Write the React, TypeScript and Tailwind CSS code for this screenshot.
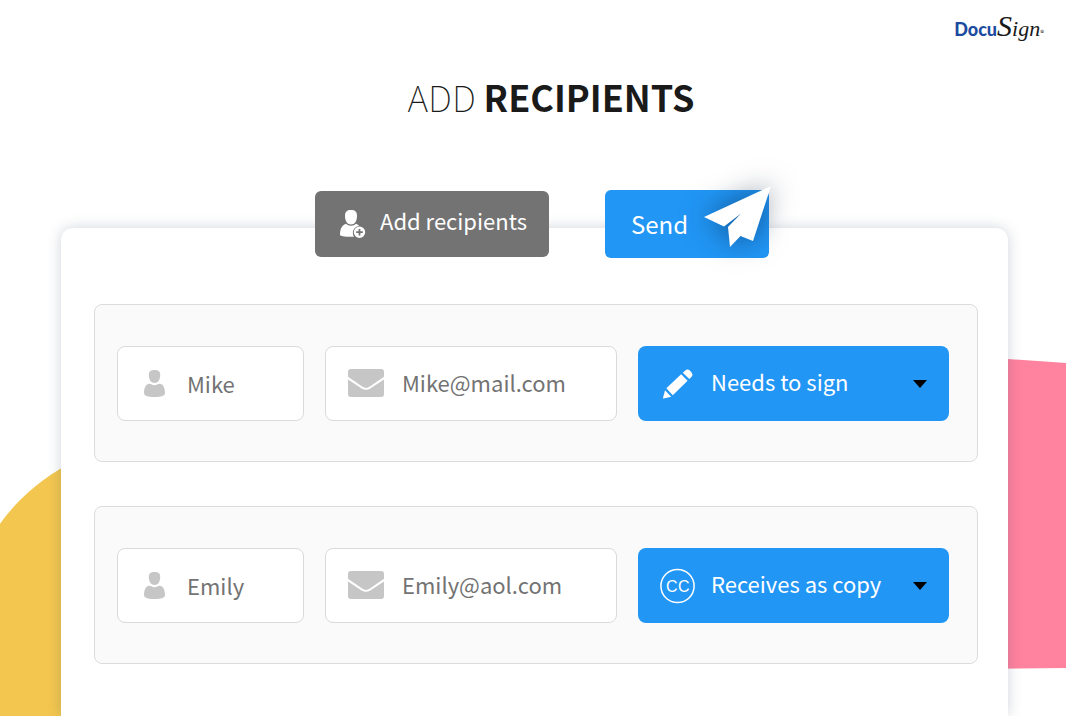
import { ReactNode } from "react";

const UserIcon = () => (
  <svg
    viewBox="0 0 21 27"
    className="h-[27px] w-[21px] flex-shrink-0 fill-[#c6c6c6]"
    aria-hidden="true"
  >
    <path d="M10.500 0C14.600 0 16.200 1.400 16.200 5C16.200 10 13.800 13 10.500 13S4.800 10 4.800 5C4.800 1.400 6.400 0 10.500 0Z" />
    <path d="M4.800 13.800C7.200 13.600 8 15.200 10.500 15.200S13.800 13.600 16.200 13.800C19.500 14.400 21 18.500 21 23C21 25.800 17.500 27 10.500 27S0 25.800 0 23C0 18.500 1.500 14.400 4.800 13.800Z" />
  </svg>
);

const MailIcon = () => (
  <svg
    viewBox="0 0 36 28"
    className="h-7 w-9 flex-shrink-0 fill-[#c6c6c6]"
    aria-hidden="true"
  >
    <path d="M3 0H33Q36 0 36 3V7.800L21.500 17.800Q18 20 14.500 17.800L0 7.800V3Q0 0 3 0Z" />
    <path d="M0 10.400L13.700 19.500Q18 22 22.300 19.500L36 10.400V25Q36 28 33 28H3Q0 28 0 25Z" />
  </svg>
);

const AddUserIcon = () => (
  <svg
    viewBox="0 0 26 28"
    className="h-7 w-[26px] flex-shrink-0 fill-white"
    aria-hidden="true"
  >
    <path d="M11 0C15.200 0 17 1.800 17 6C17 11 14.600 14.500 11 14.500S5 11 5 6C5 1.800 6.800 0 11 0Z" />
    <path d="M6 13.800C7.200 15 9 15.700 11 15.700S14.800 15 16 13.800C17.600 14.500 18.800 15.400 19.300 16C15.500 16.200 12.900 19.300 12.900 22.800C12.900 24.400 13.300 25.600 14 26.700C8.500 27.100 3 26.700 0 25.300C0 19.500 1.200 15.600 6 13.800Z" />
    <path
      fillRule="evenodd"
      d="M19.500 16.500a5.700 5.700 0 1 0 0 11.400a5.700 5.700 0 1 0 0-11.400ZM18.600 18.900H20.400V21.300H22.800V23.100H20.400V25.500H18.600V23.100H16.200V21.300H18.600Z"
    />
  </svg>
);

const PencilIcon = () => (
  <svg viewBox="0 0 30 30" className="h-[30px] w-[30px] fill-white" aria-hidden="true">
    <path d="M2 21.300L8.200 27.800L.4 29.500Q0 29.500 0 29Z" />
    <path d="M3.300 19.200L18.200 5.300L24.600 11.700L9.800 26.200Z" />
    <path d="M19.800 3.800L22.300 1.400Q24.500-.5 26.800 1.500L28.500 3.400Q30.500 5.800 28.300 8L26.300 10.100Z" />
  </svg>
);

const CopyIcon = () => (
  <svg
    viewBox="0 0 36 36"
    className="h-9 w-9 fill-white font-['Liberation_Sans'] text-base"
    aria-hidden="true"
  >
    <circle cx="17.500" cy="18" r="16.600" fill="none" stroke="white" strokeWidth="1.500" />
    <text x="6" y="24">
      C
    </text>
    <text x="18" y="24">
      C
    </text>
  </svg>
);

const Field = (props: {
  label: string;
  type: string;
  value: string;
  icon: ReactNode;
  className: string;
}) => (
  <label
    className={`flex h-[75px] min-w-0 items-center rounded-lg border border-[#dadada] bg-white ${props.className}`}
  >
    {props.icon}
    <input
      type={props.type}
      aria-label={props.label}
      defaultValue={props.value}
      className="w-full min-w-0 bg-transparent text-[22px] text-[#737373] outline-none"
    />
  </label>
);

const Recipient = (props: {
  name: string;
  email: string;
  action: string;
  icon: ReactNode;
}) => {
  return (
    <li className="grid grid-cols-[187fr_292fr_311fr] gap-[21px] rounded-lg border border-[#dcdcdc] bg-[#fafafa] pt-[41px] pr-7 pb-10 pl-[22px]">
      <Field
        label="Name"
        type="text"
        value={props.name}
        icon={<UserIcon />}
        className="gap-[22px] pl-[26px]"
      />
      <Field
        label="Email"
        type="email"
        value={props.email}
        icon={<MailIcon />}
        className="gap-[18px] pr-2 pb-0.5 pl-[22px]"
      />
      <label className="relative block h-[75px] min-w-0">
        <select
          aria-label="Action"
          defaultValue={props.action}
          className="h-full w-full appearance-none rounded-lg bg-[#2196f5] pr-10 pb-1 pl-[73px] text-[22px] text-white"
        >
          <option>Needs to sign</option>
          <option>Receives as copy</option>
        </select>
        <span className="pointer-events-none absolute inset-y-0 left-[22px] flex w-9 items-center justify-center">
          {props.icon}
        </span>
        <svg
          viewBox="0 0 14 8"
          className="pointer-events-none absolute top-[34px] right-[22px] h-2 w-3.5"
          aria-hidden="true"
        >
          <path d="M0 0H14L7 8Z" />
        </svg>
      </label>
    </li>
  );
};

const Logo = () => (
  <a
    href="#"
    aria-label="DocuSign"
    className="flex h-7 items-baseline leading-7 whitespace-nowrap"
  >
    <span className="font-['Lato',sans-serif] text-lg leading-7 font-black text-[#1c4ba0]">
      Docu
    </span>
    <span className="font-['Liberation_Serif',serif] text-[22px] leading-7 text-[#1a1a1a] italic">
      <span className="text-3xl leading-7">S</span>ign
    </span>
    <span className="text-[8px] leading-7 text-[#1a1a1a]">®</span>
  </a>
);

const App = () => {
  return (
    <div className="relative flex min-h-screen flex-col overflow-hidden bg-white font-['Noto_Sans_CJK_SC',sans-serif]">
      <svg
        viewBox="0 0 162 276"
        className="absolute top-[440px] left-0 h-[276px] w-[162px]"
        aria-hidden="true"
      >
        <circle cx="162" cy="201" r="200" fill="#f3c74f" />
      </svg>
      <svg
        viewBox="0 0 100 320"
        className="absolute top-[350px] right-0 h-80 w-[100px]"
        aria-hidden="true"
      >
        <path d="M0 6L100 13V318L0 319Z" fill="#ff829e" />
      </svg>

      <header className="flex justify-end pt-3 pr-[22px]">
        <Logo />
      </header>

      <main className="relative flex flex-1 flex-col pt-8">
        <h1 className="pl-9 text-center text-4xl leading-[48px] font-thin text-[#1a1a1a]">
          ADD <span className="font-bold">RECIPIENTS</span>
        </h1>

        <div className="relative z-10 mt-[70px] -mb-[30px] flex items-center justify-center gap-14 pl-[18px]">
          <button
            type="button"
            className="flex h-[66px] w-[234px] items-center gap-3.5 rounded-md bg-[#737373] pl-[25px] text-[22px] text-white"
          >
            <AddUserIcon />
            <span className="pb-2">Add recipients</span>
          </button>
          <button
            type="button"
            className="relative flex h-[68px] w-[164px] items-center rounded-md bg-[#2196f5] pl-[26px] text-2xl text-white"
          >
            Send
            <svg
              viewBox="0 0 67 61"
              className="absolute -top-1 -right-0.5 h-[61px] w-[67px] overflow-visible fill-white drop-shadow-[0_0_14px_rgba(0,20,50,0.5)]"
              aria-hidden="true"
            >
              <path d="M0 31L67 0L49 55L36.500 50L26 61L24 41L37 27.500L20 40.500Z" />
            </svg>
          </button>
        </div>

        <section className="mr-[58px] ml-[61px] flex-1 rounded-t-xl bg-white pt-[76px] pr-[30px] pb-[51px] pl-[33px] shadow-[0_0_14px_rgba(40,60,90,0.22)]">
          <ul className="flex flex-col gap-11">
            <Recipient
              name="Mike"
              email="Mike@mail.com"
              action="Needs to sign"
              icon={<PencilIcon />}
            />
            <Recipient
              name="Emily"
              email="Emily@aol.com"
              action="Receives as copy"
              icon={<CopyIcon />}
            />
          </ul>
        </section>
      </main>
    </div>
  );
};

export default App;
